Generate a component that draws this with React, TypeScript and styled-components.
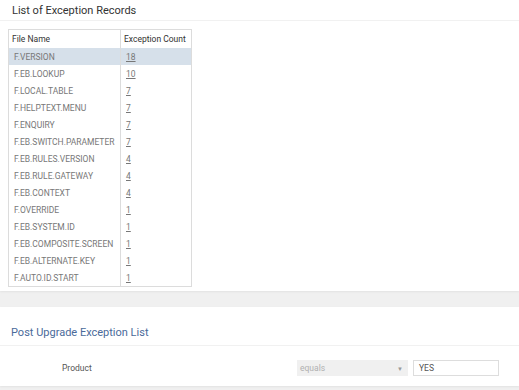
import React from "react";
import styled, { createGlobalStyle } from "styled-components";

const GlobalStyle = createGlobalStyle`
  html, body {
    margin: 0;
    padding: 0;
    background: #f0f0f0;
    font-family: Roboto, "Liberation Sans", sans-serif;
  }
`;

interface Record {
  file: string;
  count: number;
}

const records: Record[] = [
  { file: "F.VERSION", count: 18 },
  { file: "F.EB.LOOKUP", count: 10 },
  { file: "F.LOCAL.TABLE", count: 7 },
  { file: "F.HELPTEXT.MENU", count: 7 },
  { file: "F.ENQUIRY", count: 7 },
  { file: "F.EB.SWITCH.PARAMETER", count: 7 },
  { file: "F.EB.RULES.VERSION", count: 4 },
  { file: "F.EB.RULE.GATEWAY", count: 4 },
  { file: "F.EB.CONTEXT", count: 4 },
  { file: "F.OVERRIDE", count: 1 },
  { file: "F.EB.SYSTEM.ID", count: 1 },
  { file: "F.EB.COMPOSITE.SCREEN", count: 1 },
  { file: "F.EB.ALTERNATE.KEY", count: 1 },
  { file: "F.AUTO.ID.START", count: 1 },
];

const Page = styled.div`
  display: flex;
  flex-direction: column;
  gap: 16px;
  min-height: 390px;
`;

const Panel = styled.section`
  background: #fff;
  box-shadow: 0 1px 2px rgba(0, 0, 0, 0.06);
`;

const TitleBar = styled.div<{ $tall?: boolean }>`
  height: ${(p) => (p.$tall ? "39px" : "21px")};
  display: flex;
  align-items: ${(p) => (p.$tall ? "flex-end" : "center")};
  padding: ${(p) => (p.$tall ? "0 0 6px 11px" : "0 0 0 12px")};
  box-sizing: border-box;
  border-bottom: 1px solid #f1f1f1;
`;

const Title = styled.h2<{ $accent?: boolean }>`
  margin: 0;
  font-size: 11px;
  font-weight: 400;
  color: ${(p) => (p.$accent ? "#4a6a9a" : "#333")};
`;

const TableWrap = styled.div`
  padding: 8px 0 4px 8px;
`;

const Table = styled.table`
  border-collapse: collapse;
  table-layout: fixed;
  width: 183px;
  border: 1px solid #dcdcdc;
  font-size: 8.5px;
  white-space: nowrap;
`;

const HeadCell = styled.th`
  text-align: left;
  font-weight: 400;
  color: #333;
  height: 18px;
  padding: 0 3px;
  border-left: 1px solid #dcdcdc;
  &:first-child {
    border-left: none;
  }
`;

const Row = styled.tr<{ $selected?: boolean }>`
  background: ${(p) => (p.$selected ? "#d6e0ea" : "#fff")};
`;

const Cell = styled.td`
  height: 17px;
  padding: 0 0 0 5px;
  color: #777;
  overflow: hidden;
  border-left: 1px solid #dcdcdc;
  &:first-child {
    border-left: none;
  }
`;

const CountLink = styled.a`
  color: #777;
  text-decoration: underline;
`;

const FilterRow = styled.div`
  height: 40px;
  box-sizing: border-box;
  display: flex;
  align-items: center;
  padding: 4px 20px 0 62px;
`;

const Label = styled.span`
  flex: 1;
  font-size: 8.5px;
  color: #555;
`;

const Select = styled.div`
  width: 111px;
  height: 16px;
  box-sizing: border-box;
  background: #f0f0f0;
  display: flex;
  align-items: center;
  justify-content: space-between;
  padding: 0 5px 0 3px;
  font-size: 8.5px;
  color: #b0b0b0;
`;

const Arrow = styled.span`
  font-size: 6px;
  color: #999;
`;

const Input = styled.div`
  width: 86px;
  height: 16px;
  box-sizing: border-box;
  margin-left: 5px;
  border: 1px solid #ddd;
  display: flex;
  align-items: center;
  padding: 0 5px;
  font-size: 8.5px;
  color: #555;
`;

const App: React.FC = () => {
  return (
    <>
      <GlobalStyle />
      <Page>
        <Panel>
          <TitleBar>
            <Title>List of Exception Records</Title>
          </TitleBar>
          <TableWrap>
            <Table>
              <colgroup>
                <col style={{ width: 112 }} />
                <col style={{ width: 71 }} />
              </colgroup>
              <thead>
                <tr>
                  <HeadCell>File Name</HeadCell>
                  <HeadCell>Exception Count</HeadCell>
                </tr>
              </thead>
              <tbody>
                {records.map((r, i) => (
                  <Row key={r.file} $selected={i === 0}>
                    <Cell>{r.file}</Cell>
                    <Cell>
                      <CountLink>{r.count}</CountLink>
                    </Cell>
                  </Row>
                ))}
              </tbody>
            </Table>
          </TableWrap>
        </Panel>
        <Panel>
          <TitleBar $tall>
            <Title $accent>Post Upgrade Exception List</Title>
          </TitleBar>
          <FilterRow>
            <Label>Product</Label>
            <Select>
              equals
              <Arrow>▼</Arrow>
            </Select>
            <Input>YES</Input>
          </FilterRow>
        </Panel>
      </Page>
    </>
  );
};

export default App;
